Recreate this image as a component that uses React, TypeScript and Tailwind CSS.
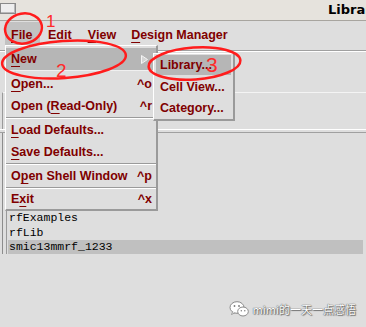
import React from "react";

const MenuRow = ({
  children,
  sc,
  h = "h-[22px]",
}: {
  children: React.ReactNode;
  sc?: string;
  h?: string;
}) => (
  <div className={`flex ${h} items-center justify-between pl-[5px] pr-[4px]`}>
    <span className="whitespace-nowrap">{children}</span>
    {sc ? <span className="whitespace-nowrap">{sc}</span> : null}
  </div>
);

const Sep = () => <div className="h-[2px] border-t border-b border-t-[#9a9a9a] border-b-white" />;

const U = ({ children }: { children: React.ReactNode }) => (
  <span className="underline decoration-[1px] underline-offset-[3px]">{children}</span>
);

export default function App() {
  return (
    <div className="relative h-[327px] w-[366px] overflow-hidden bg-[#dedede] font-['Liberation_Sans',Arial,sans-serif]">
      {/* title bar */}
      <div className="flex h-[21px] items-center border-b border-[#a8a59f] bg-[#e6e3dd]">
        <div className="mt-[-4px] h-[11px] w-[16px] shrink-0 border border-[#8a8a8a] bg-[#eeeeee] shadow-[inset_-1px_-1px_0_#b8b8b8]" />
        <div className="ml-[312px] whitespace-nowrap font-['DejaVu_Sans',sans-serif] text-[13px] font-bold text-black">
          Library Manager
        </div>
      </div>

      {/* menu bar */}
      <div className="flex h-[30px] items-start border-b border-[#a0a0a0] pt-[1px] text-[12.5px] font-bold text-[#800000]">
        <div className="ml-[5px] flex h-[26px] w-[35px] items-center bg-[#c2c2c2] pl-[6px]">
          <U>F</U>ile
        </div>
        <div className="ml-[8px] flex h-[26px] items-center">
          <U>E</U>dit
        </div>
        <div className="ml-[16px] flex h-[26px] items-center">
          <U>V</U>iew
        </div>
        <div className="ml-[15px] flex h-[26px] items-center">
          <U>D</U>esign Manager
        </div>
      </div>

      {/* body */}
      <div className="flex flex-col">
        <div className="h-[41px] border-t border-white" />
        <div className="ml-[2px] h-[37px] border-l border-t border-l-[#9a9a9a] border-t-[#f4f4f4]" />
        <div className="h-[1px] bg-white" />
        <div className="h-[2px]" />
        <div className="h-[1px] bg-[#a0a0a0]" />
        <div className="ml-[2px] flex border-l border-[#8c8c8c]">
          <div className="ml-[3px] flex w-full flex-col border-l border-[#9a9a9a] pl-[1px] pt-[2px] font-['Liberation_Mono',monospace] text-[11.5px] leading-[15px] text-black">
            <div className="h-[15px] pl-[1px]">US_8ths</div>
            <div className="h-[15px] pl-[1px]">analogLib</div>
            <div className="h-[15px] pl-[1px]">basic</div>
            <div className="h-[15px] pl-[1px]">cdsDefTechLib</div>
            <div className="h-[15px] pl-[1px]">functional</div>
            <div className="h-[15px] pl-[1px]">rfExamples</div>
            <div className="h-[15px] pl-[1px]">rfLib</div>
            <div className="mr-[3px] h-[14px] bg-[#c0c0c0] pl-[1px] leading-[14px]">smic13mmrf_1233</div>
          </div>
        </div>
      </div>

      {/* File dropdown */}
      <div className="absolute left-[5px] top-[45px] w-[153px] border-l border-t border-b-2 border-r-2 border-l-white border-t-white border-b-[#9a9a9a] border-r-[#9a9a9a] bg-[#dedede] pt-[2px] text-[12.5px] font-bold text-[#800000]">
        <div className="flex h-[23px] items-center justify-between border-b border-b-[#f0f0f0] bg-[#b6b6b6] pl-[5px] pr-[8px]">
          <span>
            <U>N</U>ew
          </span>
          <svg width="7" height="9" viewBox="0 0 7 9">
            <path d="M0.5 0.5 L6.5 4.5 L0.5 8.5 Z" fill="#d4d4d4" stroke="#f4f4f4" strokeWidth="1" />
          </svg>
        </div>
        <div className="h-[2px]" />
        <MenuRow sc="^o">
          <U>O</U>pen...
        </MenuRow>
        <MenuRow sc="^r">
          Open (<U>R</U>ead-Only)
        </MenuRow>
        <Sep />
        <MenuRow>
          <U>L</U>oad Defaults...
        </MenuRow>
        <MenuRow>
          <U>S</U>ave Defaults...
        </MenuRow>
        <Sep />
        <MenuRow sc="^p">
          O<U>p</U>en Shell Window
        </MenuRow>
        <Sep />
        <MenuRow sc="^x" h="h-[20px]">
          E<U>x</U>it
        </MenuRow>
      </div>

      {/* New submenu */}
      <div className="absolute left-[153px] top-[53px] w-[82px] border-l border-t border-b-2 border-r-2 border-l-white border-t-white border-b-[#9a9a9a] border-r-[#9a9a9a] bg-[#dedede] px-[2px] pt-[1px] text-[12.5px] font-bold text-[#800000]">
        <div className="flex h-[20px] items-center bg-[#b6b6b6] pl-[4px]">Library...</div>
        <div className="h-[2px]" />
        <div className="flex h-[21px] items-center pl-[4px]">Cell View...</div>
        <div className="flex h-[21px] items-center pl-[4px]">Category...</div>
      </div>

      {/* annotations */}
      <svg className="pointer-events-none absolute left-0 top-0" width="366" height="327" viewBox="0 0 366 327">
        <g fill="none" stroke="#ff1c1c" strokeWidth="2.5">
          <ellipse cx="23.5" cy="28.5" rx="18.5" ry="15" transform="rotate(-10 23.5 28.5)" />
          <ellipse cx="64" cy="59.5" rx="62" ry="18.5" transform="rotate(-4 64 59.5)" />
          <ellipse cx="194.5" cy="63.5" rx="46" ry="16" transform="rotate(-4 194.5 63.5)" />
        </g>
        <g fill="#ff2a2a" fontFamily="Liberation Sans, Arial, sans-serif">
          <text x="46" y="27" fontSize="17">1</text>
          <text x="56" y="77" fontSize="19">2</text>
          <text x="206" y="72" fontSize="21">3</text>
        </g>
      </svg>

      {/* watermark */}
      <div className="absolute bottom-[10px] right-[10px] flex items-center gap-[4px]">
        <svg width="20" height="16" viewBox="0 0 20 16">
          <ellipse cx="8" cy="6.5" rx="7" ry="5.8" fill="#ffffff" stroke="#8a8a8a" strokeWidth="1" />
          <path d="M3.5 11 L2.5 13.5 L6 11.8" fill="#ffffff" stroke="#8a8a8a" strokeWidth="0.8" />
          <ellipse cx="14" cy="10.5" rx="5.3" ry="4.5" fill="#ffffff" stroke="#8a8a8a" strokeWidth="1" />
          <circle cx="5.5" cy="5" r="0.9" fill="#7a7a7a" />
          <circle cx="10" cy="5" r="0.9" fill="#7a7a7a" />
          <circle cx="12.3" cy="9.8" r="0.7" fill="#7a7a7a" />
          <circle cx="15.8" cy="9.8" r="0.7" fill="#7a7a7a" />
        </svg>
        <span className="whitespace-nowrap font-['Noto_Sans_CJK_SC',sans-serif] text-[11px] text-white [text-shadow:0_0_1px_#555,0_0_1px_#555,1px_1px_1px_#777]">
          mimi的一天一点感悟
        </span>
      </div>
    </div>
  );
}
